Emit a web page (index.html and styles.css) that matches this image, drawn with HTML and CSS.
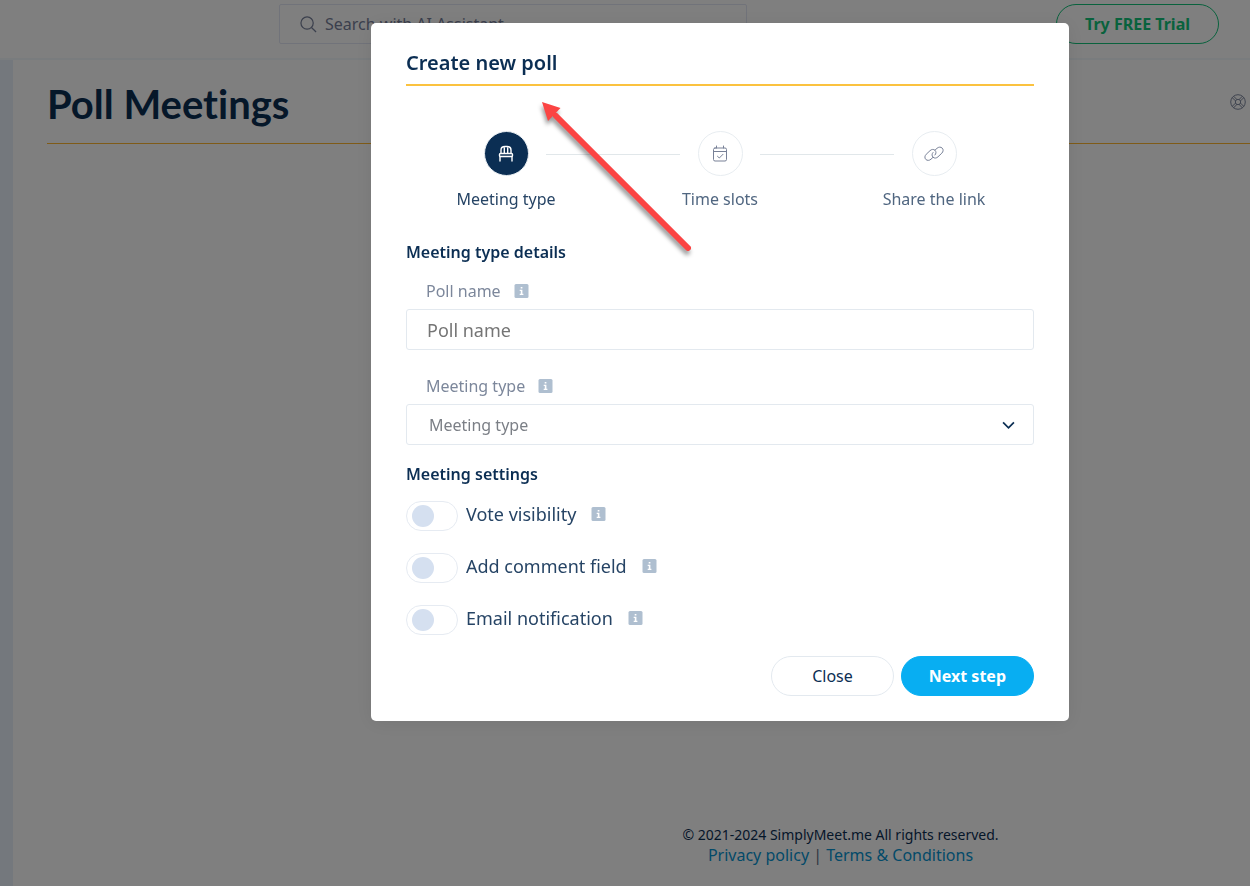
FILE: index.html
```html
<!DOCTYPE html>
<html lang="en">
<head>
    <meta charset="UTF-8">
    <meta name="viewport" content="width=device-width, initial-scale=1.0">
    <title>Poll Meetings</title>
    <link rel="stylesheet" href="styles.css">
</head>
<body>
    <div class="page">
        <header class="topbar">
            <div class="search">
                <svg class="search-icon" viewBox="0 0 18 18" aria-hidden="true">
                    <circle cx="7.5" cy="7.5" r="6.5"/>
                    <path d="M12.2 12.2L17 17"/>
                </svg>
                <input type="search" aria-label="Search" placeholder="Search with AI Assistant">
            </div>
            <button type="button" class="btn-trial">Try FREE Trial</button>
        </header>

        <div class="layout">
            <div class="sidebar"></div>
            <main class="content">
                <div class="page-head">
                    <h1>Poll Meetings</h1>
                    <svg class="help-icon" viewBox="0 0 16 16" aria-hidden="true">
                        <circle cx="8" cy="8" r="7.3"/>
                        <circle cx="8" cy="8" r="2.7"/>
                        <path d="M2.3 3.7L5.5 6.9M3.7 2.3L6.9 5.5M13.7 3.7L10.5 6.9M12.3 2.3L9.1 5.5M2.3 12.3L5.5 9.1M3.7 13.7L6.9 10.5M13.7 12.3L10.5 9.1M12.3 13.7L9.1 10.5"/>
                    </svg>
                </div>
                <footer class="footer">
                    <p class="copyright">© 2021-2024 SimplyMeet.me All rights reserved.</p>
                    <p class="footer-links"><a href="#">Privacy policy</a> | <a href="#">Terms &amp; Conditions</a></p>
                </footer>
            </main>
        </div>
    </div>

    <!-- shared info icon -->
    <svg class="sprite" aria-hidden="true">
        <symbol id="info" viewBox="0 0 14 14">
            <rect width="14" height="14" rx="1.5" fill="#afbfd0"/>
            <path d="M6.2 3h1.700v1.500H6.200zM5.200 5.800h2.700v4h1V11H5.200V9.800h1.100V7H5.200z" fill="#fff"/>
        </symbol>
    </svg>

    <div class="overlay">
        <div class="modal" role="dialog" aria-modal="true" aria-labelledby="modalTitle">
            <h2 class="modal-title" id="modalTitle">Create new poll</h2>

            <div class="steps">
                <div class="step active">
                    <span class="step-icon">
                        <svg viewBox="0 0 20 20" aria-hidden="true">
                            <path d="M5 9V6Q5 2.500 9 2.500H11Q15 2.500 15 6V9M8.300 2.700V9M11.700 2.700V9"/>
                            <rect x="3.500" y="9.500" width="13" height="3" rx="1"/>
                            <path d="M4 12.500V17M16 12.500V17"/>
                        </svg>
                    </span>
                    <span class="step-label">Meeting type</span>
                </div>
                <span class="step-line"></span>
                <div class="step">
                    <span class="step-icon">
                        <svg viewBox="0 0 20 20" aria-hidden="true">
                            <rect x="3.500" y="4" width="13" height="13" rx="1.500"/>
                            <path d="M3.500 7.500H16.500M6.500 4V2M13.500 4V2M7.500 12.300L9.300 14L13 10.300"/>
                        </svg>
                    </span>
                    <span class="step-label">Time slots</span>
                </div>
                <span class="step-line"></span>
                <div class="step">
                    <span class="step-icon">
                        <svg viewBox="0 0 20 20" aria-hidden="true">
                            <path d="M8.900 13.400L7 15.200C5.400 16.600 3.200 16.800 1.800 15.400C.4 14 .7 11.800 2.200 10.300L6 6.700C7.500 5.200 9.600 5 11 6.300C12.300 7.600 12.300 9.600 11 11"/>
                            <path d="M11.100 6.100L13 4.300C14.600 2.900 16.800 2.700 18.200 4.100C19.600 5.500 19.300 7.700 17.800 9.200L14 12.800C12.500 14.300 10.400 14.500 9 13.200C7.700 11.900 7.700 9.900 9 8.500"/>
                        </svg>
                    </span>
                    <span class="step-label">Share the link</span>
                </div>
            </div>

            <form>
                <h3 class="section-title details-title">Meeting type details</h3>
                <div class="form-group">
                    <div class="label-row">
                        <label for="pollName">Poll name</label>
                        <svg class="info"><use href="#info"/></svg>
                    </div>
                    <input type="text" class="field" id="pollName" placeholder="Poll name">
                </div>
                <div class="form-group">
                    <div class="label-row">
                        <label for="meetingType">Meeting type</label>
                        <svg class="info"><use href="#info"/></svg>
                    </div>
                    <div class="select-wrap">
                        <select class="field" id="meetingType">
                            <option>Meeting type</option>
                        </select>
                        <svg class="chevron" viewBox="0 0 12 8" aria-hidden="true"><path d="M1 1.200L6 6.200L11 1.200"/></svg>
                    </div>
                </div>

                <h3 class="section-title settings-title">Meeting settings</h3>
                <div class="toggles">
                    <div class="toggle-row">
                        <input type="checkbox" class="toggle" id="voteVisibility">
                        <label for="voteVisibility">Vote visibility</label>
                        <svg class="info"><use href="#info"/></svg>
                    </div>
                    <div class="toggle-row">
                        <input type="checkbox" class="toggle" id="commentField">
                        <label for="commentField">Add comment field</label>
                        <svg class="info"><use href="#info"/></svg>
                    </div>
                    <div class="toggle-row">
                        <input type="checkbox" class="toggle" id="emailNotification">
                        <label for="emailNotification">Email notification</label>
                        <svg class="info"><use href="#info"/></svg>
                    </div>
                </div>

                <div class="actions">
                    <button type="button" class="btn btn-close">Close</button>
                    <button type="button" class="btn btn-next">Next step</button>
                </div>
            </form>

            <svg class="arrow" viewBox="0 0 160 160" aria-hidden="true">
                <path d="M15 15L147 147" stroke="#fb4443" stroke-width="6" stroke-linecap="round"/>
                <path d="M1 1L19.500 7L7 20Z" fill="#fb4443"/>
            </svg>
        </div>
    </div>
</body>
</html>
```
FILE: styles.css
```css
* {
    box-sizing: border-box;
}

body {
    margin: 0;
    font-family: "Noto Sans", sans-serif;
    font-size: 16px;
    line-height: 24px;
    color: #0b2e53;
    background-color: #fff;
}

h1,
h2,
h3,
p {
    margin: 0;
}

button,
input,
select {
    font-family: inherit;
    font-size: 16px;
    color: inherit;
}

svg {
    fill: none;
    flex-shrink: 0;
}

.sprite {
    display: none;
}

/* page behind the dialog */
.page {
    display: flex;
    flex-direction: column;
    min-height: 100vh;
}

.topbar {
    display: flex;
    justify-content: space-between;
    align-items: flex-start;
    height: 60px;
    padding: 4px 31px 0 279px;
    border-bottom: 2px solid #f2f9fc;
}

.search {
    display: flex;
    align-items: center;
    gap: 8px;
    width: 468px;
    height: 40px;
    padding: 0 20px;
    border: 1px solid #e3e7f4;
    border-radius: 2px;
}

.search-icon {
    width: 17px;
    height: 17px;
    stroke: #77809a;
    stroke-width: 1.3;
}

.search input {
    flex: 1;
    padding: 0;
    border: none;
    background: none;
    outline: none;
}

.search input::placeholder {
    color: #77809a;
    opacity: 1;
}

.btn-trial {
    height: 40px;
    padding: 0 28px;
    border: 1px solid #12c47b;
    border-radius: 20px;
    background: none;
    color: #12c47b;
    font-weight: bold;
}

.layout {
    display: flex;
    flex: 1;
}

.sidebar {
    width: 13px;
    background-color: #e9f1fb;
}

.content {
    flex: 1;
    display: flex;
    flex-direction: column;
    justify-content: space-between;
    padding-left: 34px;
}

.page-head {
    display: flex;
    justify-content: space-between;
    align-items: center;
    height: 84px;
    padding-right: 4px;
    border-bottom: 1px solid #ffb730;
}

.page-head h1 {
    padding-top: 4px;
    font-family: Lato, sans-serif;
    font-size: 40px;
    font-weight: bold;
    font-variant-ligatures: none;
    line-height: 48px;
    color: #0b2e53;
}

.help-icon {
    width: 16px;
    height: 16px;
    stroke: #7f89a0;
}

.footer {
    padding: 0 0 21px 384px;
    text-align: center;
    line-height: 20px;
}

.copyright {
    font-size: 14px;
}

.footer-links {
    color: #5f7084;
}

.footer-links a {
    color: #0694d2;
    text-decoration: none;
}

/* dialog */
.overlay {
    position: fixed;
    inset: 0;
    display: flex;
    justify-content: center;
    align-items: flex-start;
    padding: 23px 0 0 190px;
    background-color: rgba(0, 0, 0, 0.5);
}

.modal {
    position: relative;
    width: 698px;
    padding: 25px 35px;
    border-radius: 5px;
    background-color: #fff;
    box-shadow: 0 2px 20px rgba(0, 0, 0, 0.08);
}

.modal-title {
    padding-bottom: 6px;
    border-bottom: 2px solid #fbc23f;
    font-size: 20px;
    font-weight: 600;
    line-height: 30px;
}

.steps {
    display: flex;
    margin-top: 45px;
    padding: 0 60px;
}

.step {
    display: flex;
    flex-direction: column;
    align-items: center;
    gap: 11px;
    width: 80px;
    color: #506680;
    white-space: nowrap;
}

.step-icon {
    display: flex;
    justify-content: center;
    align-items: center;
    width: 45px;
    height: 45px;
    border: 1px solid #e8edf1;
    border-radius: 50%;
}

.step-icon svg {
    width: 20px;
    height: 20px;
    stroke: #788197;
    stroke-linecap: round;
    stroke-linejoin: round;
}

.step.active {
    color: #264465;
}

.step.active .step-icon {
    background-color: #0b2e53;
}

.step.active .step-icon svg {
    stroke: #fff;
    stroke-width: 1.4;
}

.step-line {
    flex: 1;
    height: 1px;
    margin-top: 23px;
    background-color: #e1e7ea;
}

.section-title {
    font-size: 16px;
    font-weight: 600;
    line-height: 24px;
}

.details-title {
    margin: 29px 0 15px;
}

.settings-title {
    margin: 17px 0 15px;
}

.form-group + .form-group {
    margin-top: 24px;
}

.label-row {
    display: flex;
    align-items: center;
    gap: 13px;
    margin-bottom: 6px;
    padding-left: 20px;
    color: #7c879b;
}

.info {
    width: 15px;
    height: 14px;
}

.field {
    display: block;
    width: 100%;
    height: 41px;
    padding: 0 20px;
    border: 1px solid #e3e9ef;
    border-radius: 3px;
    background-color: #fff;
}

input.field {
    font-size: 18px;
}

.field::placeholder {
    color: #757575;
    opacity: 1;
}

select.field {
    appearance: none;
    padding: 0 22px;
    color: #7b7f86;
}

.select-wrap {
    position: relative;
}

.chevron {
    position: absolute;
    top: 17px;
    right: 19px;
    width: 13px;
    height: 9px;
    stroke: #0b2e53;
    stroke-width: 1.6;
    pointer-events: none;
}

.toggles {
    display: flex;
    flex-direction: column;
    gap: 22px;
}

.toggle-row {
    display: flex;
    align-items: flex-start;
    gap: 8px;
    font-size: 18px;
    line-height: 26px;
    color: #264465;
}

.toggle-row .info {
    margin: 6px 0 0 7px;
}

.toggle {
    appearance: none;
    display: flex;
    align-items: center;
    width: 52px;
    height: 30px;
    margin: 0;
    padding: 0 5px;
    border: 1px solid #e6ebf2;
    border-radius: 15px;
}

.toggle::before {
    content: "";
    width: 22px;
    height: 22px;
    border-radius: 50%;
    background-color: #d5e0f0;
}

.toggle:checked {
    justify-content: flex-end;
}

.actions {
    display: flex;
    justify-content: flex-end;
    gap: 7px;
    margin-top: 21px;
}

.btn {
    height: 40px;
    border: 1px solid #e3e9ef;
    border-radius: 20px;
    background-color: #fff;
    cursor: pointer;
}

.btn-close {
    padding: 0 40px;
}

.btn-next {
    padding: 0 27px;
    border-color: #08aef2;
    background-color: #08aef2;
    color: #fff;
    font-weight: bold;
}

/* callout arrow pointing at the title */
.arrow {
    position: absolute;
    top: 78px;
    left: 170px;
    width: 160px;
    height: 160px;
    filter: drop-shadow(-1px 4px 2px rgba(0, 0, 0, 0.4));
    pointer-events: none;
}
```
